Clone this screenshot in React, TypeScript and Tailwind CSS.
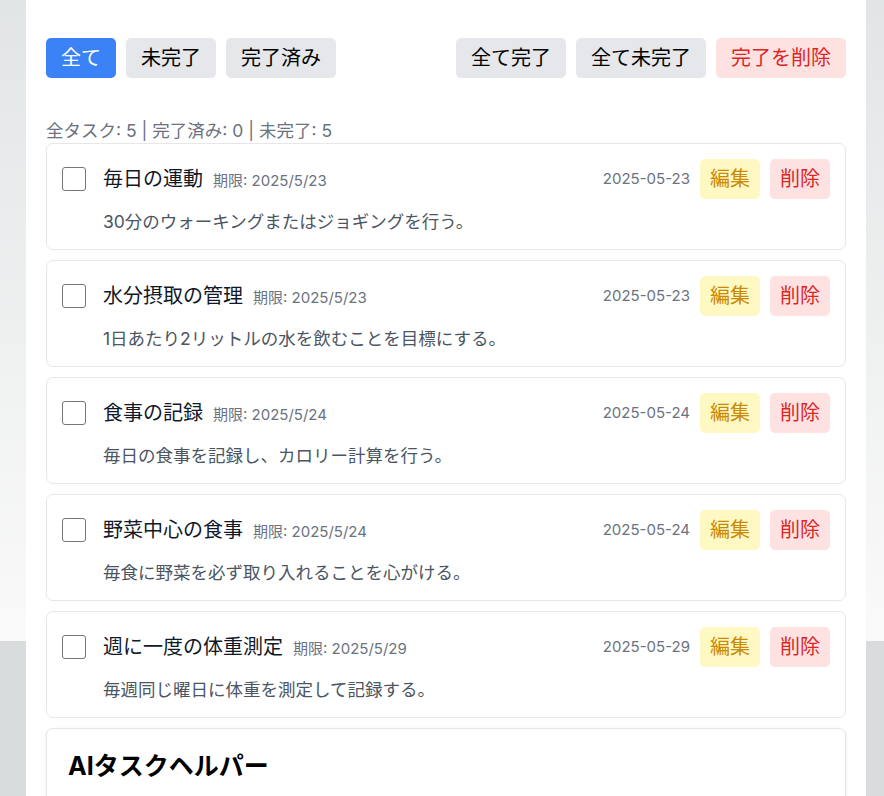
import React from "react";

type Task = { title: string; due: string; date: string; desc: string };

const tasks: Task[] = [
  { title: "毎日の運動", due: "2025/5/23", date: "2025-05-23", desc: "30分のウォーキングまたはジョギングを行う。" },
  { title: "水分摂取の管理", due: "2025/5/23", date: "2025-05-23", desc: "1日あたり2リットルの水を飲むことを目標にする。" },
  { title: "食事の記録", due: "2025/5/24", date: "2025-05-24", desc: "毎日の食事を記録し、カロリー計算を行う。" },
  { title: "野菜中心の食事", due: "2025/5/24", date: "2025-05-24", desc: "毎食に野菜を必ず取り入れることを心がける。" },
  { title: "週に一度の体重測定", due: "2025/5/29", date: "2025-05-29", desc: "毎週同じ曜日に体重を測定して記録する。" },
];

function TaskCard({ t }: { t: Task }) {
  return (
    <div className="border border-[#e5e7eb] rounded-[7px] bg-white p-[15px]">
      <div className="flex items-center justify-between h-[40px]">
        <div className="flex items-center">
          <span className="w-[24px] h-[24px] border-[1.5px] border-[#767676] rounded-[3px] bg-white shrink-0" />
          <span className="ml-[17px] text-[20px] leading-[28px] text-[#111827]">{t.title}</span>
          <span className="ml-[10px] text-[15px] leading-[20px] text-[#6b7280] mt-[3px]">期限: {t.due}</span>
        </div>
        <div className="flex items-center gap-[10px]">
          <span className="text-[15px] leading-[20px] text-[#6b7280]">{t.date}</span>
          <button className="h-[40px] px-[10px] rounded-[5px] bg-[#fef9c3] text-[#ca8a04] text-[20px] leading-[30px]">編集</button>
          <button className="h-[40px] px-[10px] rounded-[5px] bg-[#fee2e2] text-[#dc2626] text-[20px] leading-[30px]">削除</button>
        </div>
      </div>
      <p className="mt-[10px] ml-[41px] text-[17.5px] leading-[25px] text-[#4b5563]">{t.desc}</p>
    </div>
  );
}

export default function App() {
  return (
    <div
      className="min-h-[796px] bg-[#d8dcdd]"
      style={{ fontFamily: '"Inter", "Noto Sans CJK JP", sans-serif' }}
    >
      <div className="h-[641px] bg-gradient-to-b from-[#e2e5e6] to-[#fafafa]">
        <div className="ml-[26px] w-[840px] bg-white px-[20px] pt-[38px] pb-[40px]">
          <div className="flex items-center justify-between">
            <div className="flex gap-[10px]">
              <button className="h-[40px] px-[15px] rounded-[5px] bg-[#3b82f6] text-white text-[20px] leading-[30px]">全て</button>
              <button className="h-[40px] px-[15px] rounded-[5px] bg-[#e5e7eb] text-black text-[20px] leading-[30px]">未完了</button>
              <button className="h-[40px] px-[15px] rounded-[5px] bg-[#e5e7eb] text-black text-[20px] leading-[30px]">完了済み</button>
            </div>
            <div className="flex gap-[10px]">
              <button className="h-[40px] px-[15px] rounded-[5px] bg-[#e5e7eb] text-black text-[20px] leading-[30px]">全て完了</button>
              <button className="h-[40px] px-[15px] rounded-[5px] bg-[#e5e7eb] text-black text-[20px] leading-[30px]">全て未完了</button>
              <button className="h-[40px] px-[15px] rounded-[5px] bg-[#fee2e2] text-[#dc2626] text-[20px] leading-[30px]">完了を削除</button>
            </div>
          </div>
          <div className="mt-[40px] text-[17.5px] leading-[25px] text-[#6b7280]">
            全タスク: 5 | 完了済み: 0 | 未完了: 5
          </div>
          <div className="flex flex-col gap-[10px]">
            {tasks.map((t) => (
              <TaskCard key={t.title} t={t} />
            ))}
            <div className="border border-[#e5e7eb] rounded-[7px] bg-white shadow-sm px-[21px] pt-[20px] pb-[20px]">
              <h2 className="text-[25px] leading-[35px] font-bold text-black">AIタスクヘルパー</h2>
              <div className="h-[60px]" />
            </div>
          </div>
        </div>
      </div>
    </div>
  );
}
